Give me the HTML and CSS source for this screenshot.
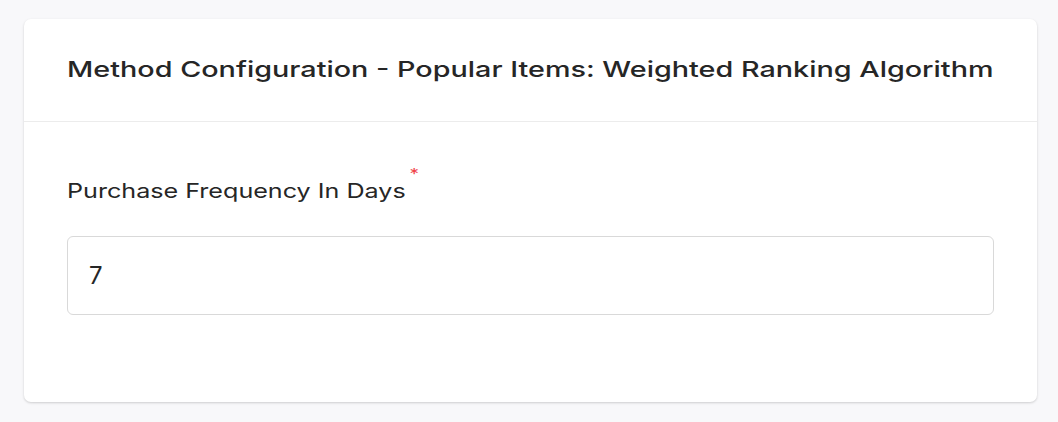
FILE: index.html
```html
<!DOCTYPE html>
<html>
<head>
  <title>Method Configuration</title>
  <link rel="stylesheet" href="styles.css">
</head>
<body>
  <div class="card">
    <div class="card-header">
      <h2><span class="wide">Method Configuration - Popular Items: Weighted Ranking Algorithm</span></h2>
    </div>
    <div class="card-body">
      <label for="purchase-frequency"><span class="wide">Purchase Frequency In Days<span class="required">*</span></span></label>
      <input type="text" id="purchase-frequency" value="7">
    </div>
  </div>
</body>
</html>
```

FILE: styles.css
```css
/* Page */
body {
  margin: 0;
  padding: 19px 21px 20px 24px;
  background-color: #f8f8fa;
  font-family: Inter, "Noto Sans", sans-serif;
  color: #262626;
}

.card {
  background-color: #fff;
  border-radius: 7px;
  box-shadow: 0 1px 3px rgba(0, 0, 0, 0.12), 0 1px 2px rgba(0, 0, 0, 0.06);
  height: 383px;
}

.card-header {
  height: 102px;
  padding: 0 43px;
  border-bottom: 1px solid #ececec;
  display: flex;
  align-items: center;
}

/* the text in this UI is drawn wider than the font's natural width */
.wide {
  display: inline-block;
  transform-origin: left center;
  white-space: nowrap;
}

.card-header h2 {
  margin: 0 0 2px 0;
  font-size: 22px;
  font-weight: 500;
}

.card-header .wide {
  transform: scaleX(1.308);
}

.card-body {
  padding: 55px 43px 0 43px;
}

label {
  display: block;
  font-size: 20px;
  line-height: 28px;
  margin-bottom: 29px;
}

label .wide {
  transform: scaleX(1.256);
}

.required {
  position: relative;
  top: -19px;
  color: #f0434a;
  font-size: 15px;
  margin-left: 3px;
}

input[type="text"] {
  display: block;
  box-sizing: border-box;
  width: 100%;
  height: 79px;
  padding: 0 21px;
  border: 1px solid #d9d9d9;
  border-radius: 6px;
  font-family: Inter, "Noto Sans", sans-serif;
  font-size: 24px;
  color: #262626;
  outline: none;
}
```
